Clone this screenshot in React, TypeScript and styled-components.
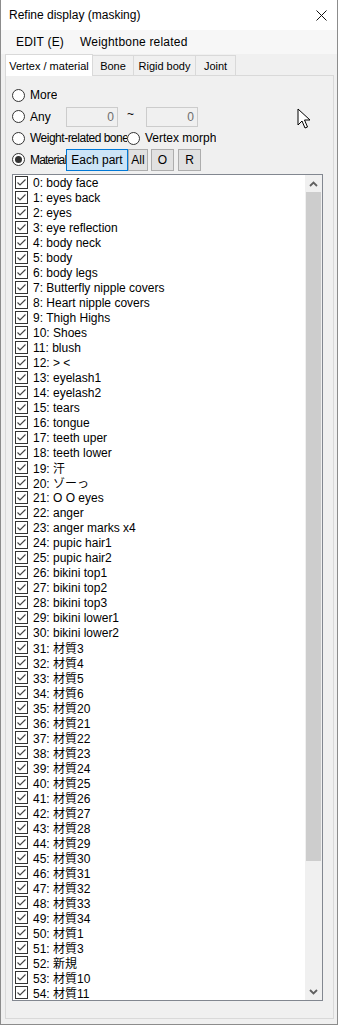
import React from 'react';
import styled, { createGlobalStyle } from 'styled-components';

const materials = [
  'body face', 'eyes back', 'eyes', 'eye reflection', 'body neck', 'body', 'body legs',
  'Butterfly nipple covers', 'Heart nipple covers', 'Thigh Highs', 'Shoes', 'blush', '> <',
  'eyelash1', 'eyelash2', 'tears', 'tongue', 'teeth uper', 'teeth lower', '汗', 'ゾーっ',
  ' O O eyes', 'anger', 'anger marks x4', 'pupic hair1', 'pupic hair2', 'bikini top1',
  'bikini top2', 'bikini top3', 'bikini lower1', 'bikini lower2', '材質3', '材質4', '材質5',
  '材質6', '材質20', '材質21', '材質22', '材質23', '材質24', '材質25', '材質26', '材質27',
  '材質28', '材質29', '材質30', '材質31', '材質32', '材質33', '材質34', '材質1', '材質3',
  '新規', '材質10', '材質11',
];

const tabs = ['Vertex / material', 'Bone', 'Rigid body', 'Joint'];
const tabWidths = [88, 42, 63, 41];

const GlobalStyle = createGlobalStyle`
  html, body {
    margin: 0;
    padding: 0;
    background: #f0f0f0;
  }
  body {
    font-family: "Liberation Sans", "Noto Sans CJK JP", sans-serif;
    font-size: 12px;
    color: #000;
  }
`;

const Window = styled.div`
  position: relative;
  box-sizing: border-box;
  width: 338px;
  height: 1025px;
  border: 1px solid #8c8c8c;
  border-top: none;
  background: #f0f0f0;
  display: flex;
  flex-direction: column;
  overflow: hidden;
`;

const TitleBar = styled.div`
  height: 30px;
  background: #fff;
  display: flex;
  align-items: center;
  justify-content: space-between;
  padding: 0 10px 0 8px;
`;

const MenuBar = styled.div`
  height: 24px;
  background: #f7f7f7;
  display: flex;
  align-items: center;
  padding-left: 7px;
`;

const MenuItem = styled.span`
  padding: 0 8px;
  letter-spacing: 0.2px;
`;

const TabStrip = styled.div`
  display: flex;
  align-items: flex-end;
  height: 21px;
  padding-left: 5px;
`;

const Tab = styled.div<{ $active?: boolean; $width: number }>`
  box-sizing: border-box;
  width: ${(p) => p.$width}px;
  height: ${(p) => (p.$active ? 22 : 20)}px;
  display: flex;
  align-items: center;
  justify-content: center;
  font-size: 11px;
  border: 1px solid #d9d9d9;
  border-bottom: none;
  margin-left: -1px;
  background: ${(p) => (p.$active ? '#fff' : '#f0f0f0')};
  position: relative;
  z-index: ${(p) => (p.$active ? 1 : 0)};
  margin-bottom: ${(p) => (p.$active ? -1 : 0)}px;
`;

const Panel = styled.div`
  box-sizing: border-box;
  margin: 0 3px 5px 4px;
  flex: 1;
  border: 1px solid #d9d9d9;
  background: #f0f0f0;
  padding: 8px 10px 0 6px;
  display: flex;
  flex-direction: column;
`;

const Options = styled.div`
  display: grid;
  grid-template-rows: 22px 21px 22px 21px;
`;

const OptionRow = styled.div`
  display: flex;
  align-items: center;
`;

const RadioLabel = styled.label<{ $width?: number; $spacing?: number }>`
  display: flex;
  align-items: center;
  gap: 5px;
  white-space: nowrap;
  overflow: hidden;
  flex-shrink: 0;
  width: ${(p) => (p.$width ? `${p.$width}px` : 'auto')};
  letter-spacing: ${(p) => p.$spacing ?? 0}px;
`;

const RadioCircle = styled.span<{ $checked?: boolean }>`
  box-sizing: border-box;
  flex-shrink: 0;
  width: 13px;
  height: 13px;
  border: 1px solid #333;
  border-radius: 50%;
  background: #fff;
  display: flex;
  align-items: center;
  justify-content: center;
  &::after {
    content: '';
    display: ${(p) => (p.$checked ? 'block' : 'none')};
    width: 7px;
    height: 7px;
    border-radius: 50%;
    background: #333;
  }
`;

const NumberField = styled.div`
  box-sizing: border-box;
  width: 52px;
  height: 20px;
  border: 1px solid #cccccc;
  background: #f0f0f0;
  color: #6d6d6d;
  text-align: right;
  padding-right: 3px;
  line-height: 18px;
`;

const Tilde = styled.span`
  width: 28px;
  padding-left: 9px;
  box-sizing: border-box;
  margin-top: -6px;
`;

const ButtonGroup = styled.div`
  display: flex;
  align-items: center;
`;

const PushButton = styled.div<{ $selected?: boolean; $width: number; $gap?: number }>`
  box-sizing: border-box;
  width: ${(p) => p.$width}px;
  height: 22px;
  margin-left: ${(p) => p.$gap ?? 0}px;
  display: flex;
  align-items: center;
  justify-content: center;
  border: 1px solid ${(p) => (p.$selected ? '#0078d7' : '#adadad')};
  background: ${(p) => (p.$selected ? '#cce4f7' : '#e1e1e1')};
`;

const ListBox = styled.div`
  box-sizing: border-box;
  margin-top: 4px;
  height: 827px;
  border: 1px solid #828790;
  background: #fff;
  display: flex;
  overflow: hidden;
`;

const Items = styled.div`
  flex: 1;
  padding: 0 0 0 2px;
  overflow: hidden;
`;

const Item = styled.div`
  height: 15px;
  display: flex;
  align-items: center;
  gap: 5px;
  white-space: nowrap;
`;

const CheckBox = styled.span`
  box-sizing: border-box;
  width: 13px;
  height: 13px;
  border: 1px solid #333;
  background: #fff;
  display: flex;
  align-items: center;
  justify-content: center;
`;

const ScrollBar = styled.div`
  width: 17px;
  background: #f0f0f0;
  display: flex;
  flex-direction: column;
`;

const ScrollArrow = styled.div`
  height: 17px;
  display: flex;
  align-items: center;
  justify-content: center;
`;

const Thumb = styled.div`
  margin: 0 1px;
  height: 669px;
  background: #cdcdcd;
`;

const Track = styled.div`
  flex: 1;
`;

const Cursor = styled.svg`
  position: absolute;
  left: 296px;
  top: 108px;
`;

const Check = () => (
  <svg width="11" height="11" viewBox="0 0 11 11">
    <path d="M1.5 5.5 L4 8 L9.5 2.5" fill="none" stroke="#444" strokeWidth="1.2" />
  </svg>
);

const Chevron = ({ up }: { up?: boolean }) => (
  <svg width="9" height="6" viewBox="0 0 9 6">
    <path
      d={up ? 'M1 5 L4.5 1.5 L8 5' : 'M1 1 L4.5 4.5 L8 1'}
      fill="none"
      stroke="#606060"
      strokeWidth="1.8"
    />
  </svg>
);

const Radio: React.FC<{ label: string; checked?: boolean; width?: number; spacing?: number }> = ({
  label,
  checked,
  width,
  spacing,
}) => (
  <RadioLabel $width={width} $spacing={spacing}>
    <RadioCircle $checked={checked} />
    {label}
  </RadioLabel>
);

const App: React.FC = () => {
  return (
    <>
      <GlobalStyle />
      <Window>
        <TitleBar>
          <span>Refine display (masking)</span>
          <svg width="11" height="11" viewBox="0 0 11 11">
            <path d="M0.5 0.5 L10.5 10.5 M10.5 0.5 L0.5 10.5" stroke="#111" strokeWidth="1" />
          </svg>
        </TitleBar>
        <MenuBar>
          <MenuItem>EDIT (E)</MenuItem>
          <MenuItem>Weightbone related</MenuItem>
        </MenuBar>
        <TabStrip>
          {tabs.map((t, i) => (
            <Tab key={t} $active={i === 0} $width={tabWidths[i]}>
              {t}
            </Tab>
          ))}
        </TabStrip>
        <Panel>
          <Options>
            <OptionRow>
              <Radio label="More" />
            </OptionRow>
            <OptionRow>
              <Radio label="Any" width={54} />
              <NumberField>0</NumberField>
              <Tilde>~</Tilde>
              <NumberField>0</NumberField>
            </OptionRow>
            <OptionRow>
              <Radio label="Weight-related bone" width={115} spacing={-0.5} />
              <Radio label="Vertex morph" />
            </OptionRow>
            <OptionRow>
              <Radio label="Material" checked width={54} spacing={-0.8} />
              <ButtonGroup>
                <PushButton $selected $width={62}>Each part</PushButton>
                <PushButton $width={20}>All</PushButton>
                <PushButton $width={23} $gap={3}>O</PushButton>
                <PushButton $width={23} $gap={4}>R</PushButton>
              </ButtonGroup>
            </OptionRow>
          </Options>
          <ListBox>
            <Items>
              {materials.map((m, i) => (
                <Item key={i}>
                  <CheckBox>
                    <Check />
                  </CheckBox>
                  <span>{`${i}: ${m}`}</span>
                </Item>
              ))}
            </Items>
            <ScrollBar>
              <ScrollArrow>
                <Chevron up />
              </ScrollArrow>
              <Thumb />
              <Track />
              <ScrollArrow>
                <Chevron />
              </ScrollArrow>
            </ScrollBar>
          </ListBox>
        </Panel>
        <Cursor width="14" height="22" viewBox="0 0 14 22">
          <path d="M1 1 L1 17 L5 13 L8 20 L10.5 19 L7.5 12 L13 12 Z" fill="#fff" stroke="#000" strokeWidth="1" />
        </Cursor>
      </Window>
    </>
  );
};

export default App;
